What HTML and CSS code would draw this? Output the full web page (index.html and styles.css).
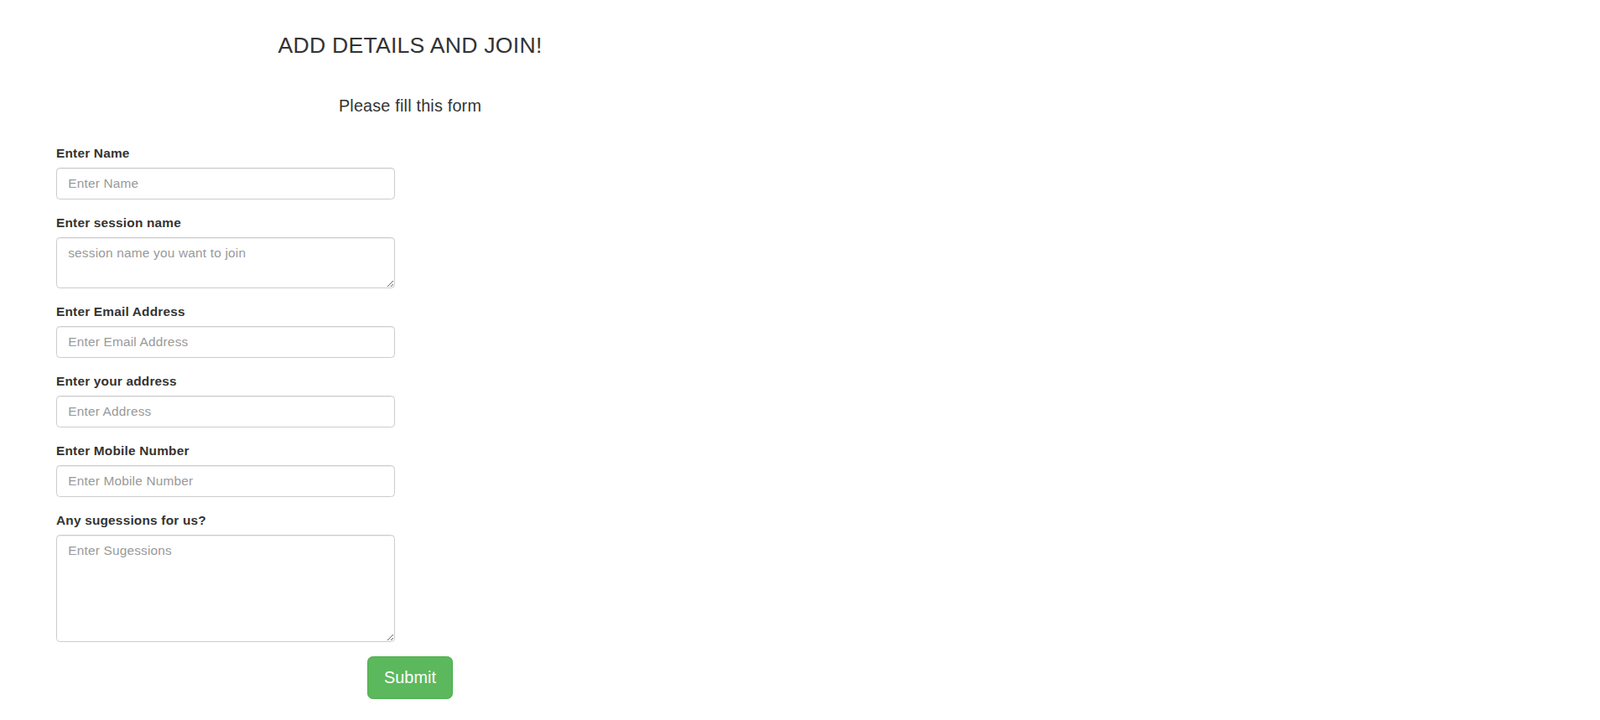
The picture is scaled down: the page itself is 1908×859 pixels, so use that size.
FILE: index.html
```html
<!DOCTYPE html>
<html lang="en">
<head>
<meta charset="utf-8">
<title>Add details and join</title>
<link rel="stylesheet" href="styles.css">
</head>
<body>
<main class="page">
  <h1 class="title">ADD DETAILS AND JOIN!</h1>
  <p class="subtitle">Please fill this form</p>
  <form class="join-form">
    <div class="field">
      <label class="field-label" for="name">Enter Name</label>
      <input class="control" id="name" type="text" placeholder="Enter Name">
    </div>
    <div class="field">
      <label class="field-label" for="session">Enter session name</label>
      <textarea class="control control-area-sm" id="session" placeholder="session name you want to join"></textarea>
    </div>
    <div class="field">
      <label class="field-label" for="email">Enter Email Address</label>
      <input class="control" id="email" type="email" placeholder="Enter Email Address">
    </div>
    <div class="field">
      <label class="field-label" for="address">Enter your address</label>
      <input class="control" id="address" type="text" placeholder="Enter Address">
    </div>
    <div class="field">
      <label class="field-label" for="mobile">Enter Mobile Number</label>
      <input class="control" id="mobile" type="text" placeholder="Enter Mobile Number">
    </div>
    <div class="field field-last">
      <label class="field-label" for="sugg">Any sugessions for us?</label>
      <textarea class="control control-area-lg" id="sugg" placeholder="Enter Sugessions"></textarea>
    </div>
    <div class="actions">
      <button class="btn-submit" type="submit">Submit</button>
    </div>
  </form>
</main>
</body>
</html>
```
FILE: styles.css
```css
html, body {
  margin: 0;
  padding: 0;
  background: #fff;
}
body {
  font-family: "Liberation Sans", Arial, Helvetica, sans-serif;
  color: #333;
  font-size: 15.4px;
  line-height: 22px;
}
.page {
  width: 844px;
  padding: 40px 0 40px 67px;
}
.title {
  margin: 0;
  font-size: 26.6px;
  line-height: 29px;
  font-weight: 500;
  letter-spacing: 0.25px;
  text-align: center;
  color: #333;
}
.subtitle {
  margin: 47px 0 0;
  font-size: 19.8px;
  line-height: 21.8px;
  font-weight: 500;
  letter-spacing: 0.2px;
  text-align: center;
}
.join-form {
  margin-top: 34px;
}
.field {
  width: 404px;
  margin-bottom: 17.1px;
}
.field-last {
  margin-bottom: 17.3px;
}
.field-label {
  display: block;
  font-weight: bold;
  font-size: 15.4px;
  line-height: 22px;
  letter-spacing: 0.2px;
  margin-bottom: 6.5px;
  color: #333;
}
.control {
  display: block;
  box-sizing: border-box;
  width: 100%;
  height: 37.4px;
  margin: 0;
  padding: 6.6px 13.2px;
  font-family: inherit;
  font-size: 15.4px;
  line-height: 22px;
  letter-spacing: 0.2px;
  color: #555;
  background: #fff;
  border: 1px solid #ccc;
  border-radius: 4.4px;
  box-shadow: inset 0 1px 1px rgba(0, 0, 0, 0.075);
}
.control::placeholder {
  color: #999;
  opacity: 1;
}
.control-area-sm {
  height: 60.4px;
}
.control-area-lg {
  height: 127.4px;
}
.actions {
  text-align: center;
}
.btn-submit {
  display: inline-block;
  box-sizing: border-box;
  height: 50.6px;
  padding: 11px 18.6px;
  font-family: inherit;
  font-size: 19.8px;
  line-height: 26.4px;
  letter-spacing: 0.1px;
  color: #fff;
  background: #5cb85c;
  border: 1px solid #4cae4c;
  border-radius: 6.6px;
  cursor: pointer;
}
```
